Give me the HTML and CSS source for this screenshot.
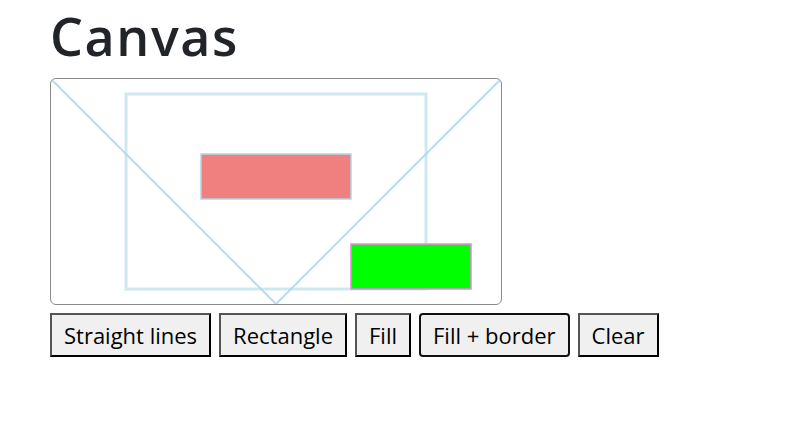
FILE: index.html
```html
<!DOCTYPE html>
<html>
<head>
<meta charset="utf-8">
<link rel="stylesheet" href="styles.css">
</head>
<body>
<main class="page">
  <h1 class="title">Canvas</h1>
  <svg class="board" width="450" height="225" viewBox="0 0 450 225">
    <polyline points="0,0 225,225 450,0" fill="none" stroke="#add8e6" stroke-width="2" opacity="0.85"/>
    <rect x="75" y="15" width="300" height="195" fill="none" stroke="#add8e6" stroke-width="3" opacity="0.6"/>
    <rect x="150" y="75" width="150" height="45" fill="#f08080" stroke="#add8e6" stroke-width="1.5"/>
    <rect x="300" y="165" width="120" height="45" fill="#00ff00" stroke="#ee82ee" stroke-width="1.5"/>
  </svg>
  <div class="toolbar">
    <button class="btn">Straight lines</button>
    <button class="btn">Rectangle</button>
    <button class="btn">Fill</button>
    <button class="btn focus">Fill + border</button>
    <button class="btn">Clear</button>
  </div>
</main>
</body>
</html>
```
FILE: styles.css
```css
html, body {
  margin: 0;
  padding: 0;
  background: #fff;
}
.page {
  padding: 0 50px;
  font-family: "Open Sans", "Noto Sans", sans-serif;
  color: #212529;
}
.title {
  margin: 0 0 7px;
  font-size: 52px;
  font-weight: 600;
  line-height: 71px;
  letter-spacing: 1.6px;
}
.board {
  display: block;
  border: 1px solid #8a8a8a;
  border-radius: 6px;
  background: #fff;
}
.toolbar {
  display: flex;
  gap: 8px;
  margin-top: 8px;
}
.btn {
  font-family: "Open Sans", "Noto Sans", sans-serif;
  font-size: 22px;
  height: 44px;
  padding: 0 12px;
  background: #f0f0f0;
  color: #000;
  border: 2px solid #555;
  border-right-color: #000;
  border-bottom-color: #000;
  border-radius: 0;
}
.btn.focus {
  border: 2px solid #111;
  border-radius: 4px;
}
```
